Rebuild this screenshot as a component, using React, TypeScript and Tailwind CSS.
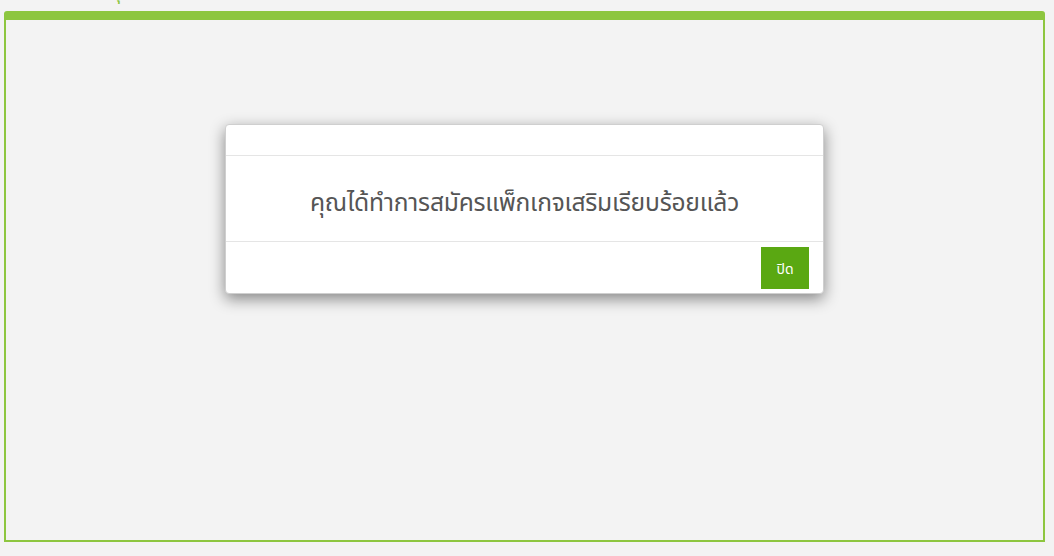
export default function App() {
  return (
    <div
      className="min-h-[556px] w-[1054px] bg-[#f3f3f3] overflow-hidden"
      style={{ fontFamily: '"Noto Sans", "Noto Sans Thai", "Liberation Sans", sans-serif' }}
    >
      {/* Cut-off page title */}
      <div className="h-[11px] overflow-hidden relative">
        <div className="absolute left-[110px] -top-[22px] text-[20px] leading-[28px] text-[#8dc63f]">ลุ</div>
      </div>

      {/* Panel */}
      <div className="mx-[4px] h-[531px] w-[1041px] rounded-t-[3px] border-2 border-t-[9px] border-[#8dc63f] bg-[#f3f3f3] flex justify-center">
        {/* Modal */}
        <div className="mt-[104px] w-[599px] h-[170px] self-start rounded-[4px] bg-white border border-[#cfcfcf] shadow-[0_5px_15px_rgba(0,0,0,0.45)] flex flex-col">
          <div className="h-[31px] border-b border-[#e5e5e5]" />
          <div className="h-[86px] border-b border-[#e5e5e5] flex items-center justify-center pt-[7px]">
            <p className="text-[24.6px] text-[#555555] tracking-[-0.2px]">คุณได้ทำการสมัครแพ็กเกจเสริมเรียบร้อยแล้ว</p>
          </div>
          <div className="flex-1 flex items-start justify-end pt-[5px] pr-[14px]">
            <button className="w-[48px] h-[42px] bg-[#5aa812] text-white text-[14px]">ปิด</button>
          </div>
        </div>
      </div>
    </div>
  );
}
